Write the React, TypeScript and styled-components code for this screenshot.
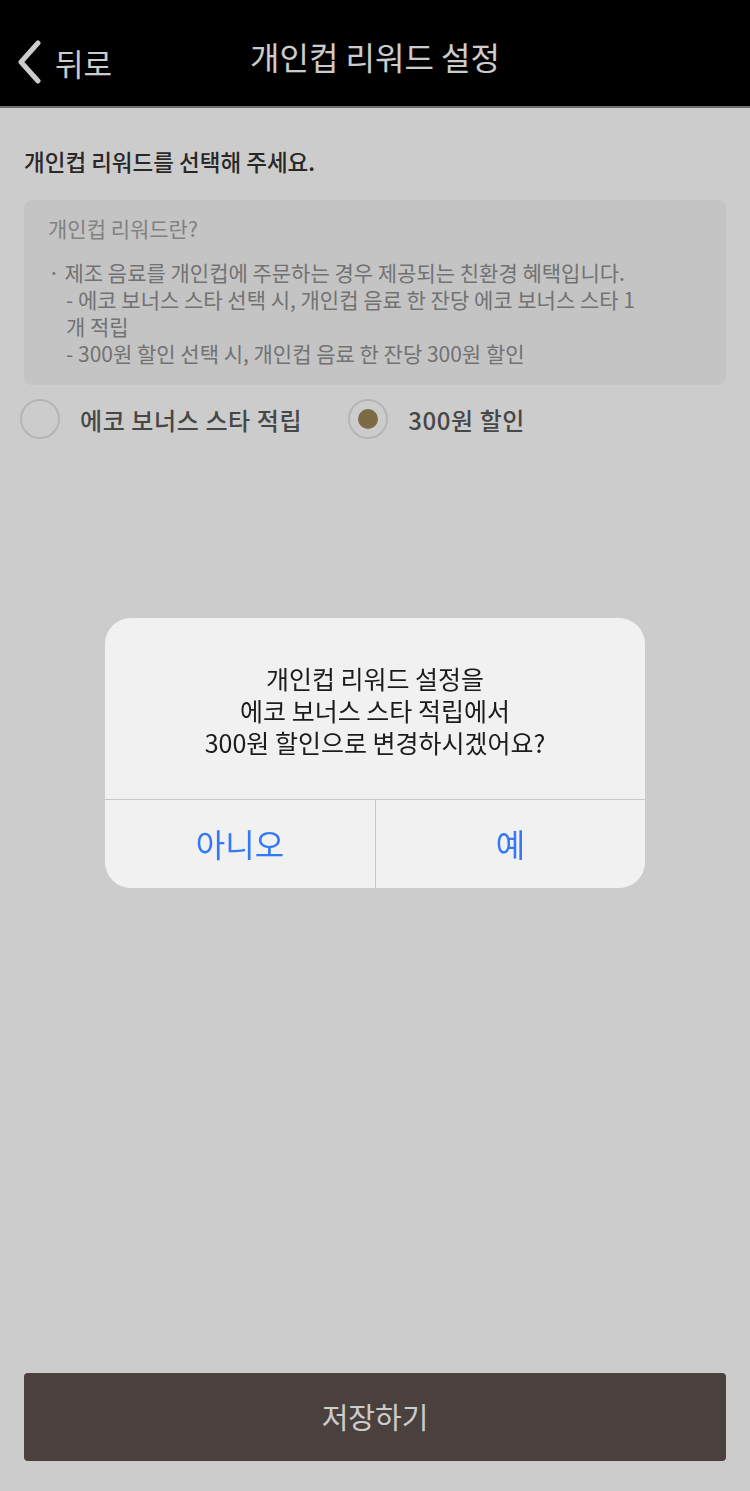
import React, { useState } from "react";
import styled, { createGlobalStyle } from "styled-components";

const Global = createGlobalStyle`
  html, body { margin: 0; padding: 0; }
  body {
    background: #ffffff;
    font-family: "Noto Sans CJK KR", "Noto Sans", sans-serif;
  }
  * { box-sizing: border-box; }
`;

const Page = styled.div`
  min-height: 100vh;
  display: flex;
  flex-direction: column;
  background: #ffffff;
`;

const Header = styled.header`
  height: 108px;
  background: #000;
  border-bottom: 2px solid #8a8a8a;
  position: relative;
  display: flex;
  align-items: center;
  justify-content: center;
`;

const BackButton = styled.button`
  position: absolute;
  left: 16px;
  top: 40px;
  display: flex;
  align-items: center;
  gap: 13px;
  background: none;
  border: none;
  padding: 0;
  color: #ffffff;
  font-family: inherit;
  font-size: 31px;
  line-height: 1;
`;

const Title = styled.h1`
  margin: 0;
  color: #ffffff;
  font-size: 32px;
  font-weight: 400;
  letter-spacing: 0;
  padding-top: 6px;
`;

const Content = styled.main`
  padding: 0 24px;
  display: flex;
  flex-direction: column;
`;

const Heading = styled.h2`
  margin: 38px 0 0 0;
  font-size: 22.5px;
  font-weight: 500;
  color: #333333;
  line-height: 30px;
`;

const InfoBox = styled.section`
  margin-top: 24px;
  background: #f5f5f5;
  border-radius: 8px;
  padding: 14px 78px 18px 24px;
`;

const InfoTitle = styled.div`
  font-size: 21px;
  color: #a3a3a3;
  line-height: 28px;
`;

const InfoList = styled.div`
  margin-top: 17px;
  font-size: 21px;
  color: #8f8f8f;
  line-height: 27px;
`;

const InfoLine = styled.div<{ $sub?: boolean }>`
  padding-left: ${(p) => (p.$sub ? 18 : 0)}px;
`;

const Options = styled.div`
  display: flex;
  align-items: center;
  margin-top: 14px;
  margin-left: -4px;
  gap: 46px;
`;

const Option = styled.label`
  display: flex;
  align-items: center;
  gap: 20px;
  font-size: 24px;
  font-weight: 500;
  color: #595959;
  letter-spacing: 0.6px;
  cursor: pointer;
`;

const Radio = styled.span<{ $checked: boolean }>`
  width: 40px;
  height: 40px;
  border-radius: 50%;
  border: 2px solid #e3e3e3;
  background: #fff;
  display: flex;
  align-items: center;
  justify-content: center;
  &::after {
    content: "";
    width: 20px;
    height: 20px;
    border-radius: 50%;
    background: ${(p) => (p.$checked ? "#9a8659" : "transparent")};
  }
`;

const SaveButton = styled.button`
  margin: auto 24px 30px 24px;
  height: 88px;
  border: none;
  border-radius: 4px;
  background: #5d504e;
  color: #ffffff;
  font-family: inherit;
  font-size: 29px;
  padding-bottom: 3px;
`;

const Backdrop = styled.div`
  position: fixed;
  inset: 0;
  background: rgba(0, 0, 0, 0.2);
  display: flex;
  align-items: center;
  justify-content: center;
  padding-top: 15px;
`;

const Dialog = styled.div`
  width: 540px;
  background: #f1f1f1;
  border-radius: 26px;
  overflow: hidden;
  display: flex;
  flex-direction: column;
`;

const Message = styled.div`
  height: 182px;
  display: flex;
  align-items: center;
  justify-content: center;
  text-align: center;
  font-size: 25px;
  line-height: 32px;
  color: #1c1c1c;
  padding-top: 2px;
  border-bottom: 1px solid #c8c8c8;
`;

const Actions = styled.div`
  display: grid;
  grid-template-columns: 1fr 1fr;
  height: 88px;
`;

const ActionButton = styled.button`
  background: none;
  border: none;
  font-family: inherit;
  font-size: 32px;
  color: #3478f6;
  padding: 0;
  padding-bottom: 2px;
  & + & {
    border-left: 1px solid #c8c8c8;
  }
`;

const Chevron = () => (
  <svg width="26" height="44" viewBox="0 0 26 44" fill="none">
    <path d="M22 3 L5 22 L22 41" stroke="#ffffff" strokeWidth="5" strokeLinecap="round" strokeLinejoin="round" />
  </svg>
);

export default function App() {
  const [choice, setChoice] = useState<"eco" | "discount">("discount");
  return (
    <>
      <Global />
      <Page>
        <Header>
          <BackButton>
            <Chevron />
            <span>뒤로</span>
          </BackButton>
          <Title>개인컵 리워드 설정</Title>
        </Header>
        <Content>
          <Heading>개인컵 리워드를 선택해 주세요.</Heading>
          <InfoBox>
            <InfoTitle>개인컵 리워드란?</InfoTitle>
            <InfoList>
              <InfoLine>· 제조 음료를 개인컵에 주문하는 경우 제공되는 친환경 혜택입니다.</InfoLine>
              <InfoLine $sub>- 에코 보너스 스타 선택 시, 개인컵 음료 한 잔당 에코 보너스 스타 1개 적립</InfoLine>
              <InfoLine $sub>- 300원 할인 선택 시, 개인컵 음료 한 잔당 300원 할인</InfoLine>
            </InfoList>
          </InfoBox>
          <Options>
            <Option onClick={() => setChoice("eco")}>
              <Radio $checked={choice === "eco"} />
              에코 보너스 스타 적립
            </Option>
            <Option onClick={() => setChoice("discount")}>
              <Radio $checked={choice === "discount"} />
              300원 할인
            </Option>
          </Options>
        </Content>
        <SaveButton>저장하기</SaveButton>
      </Page>
      <Backdrop>
        <Dialog>
          <Message>
            개인컵 리워드 설정을
            <br />
            에코 보너스 스타 적립에서
            <br />
            300원 할인으로 변경하시겠어요?
          </Message>
          <Actions>
            <ActionButton>아니오</ActionButton>
            <ActionButton>예</ActionButton>
          </Actions>
        </Dialog>
      </Backdrop>
    </>
  );
}
